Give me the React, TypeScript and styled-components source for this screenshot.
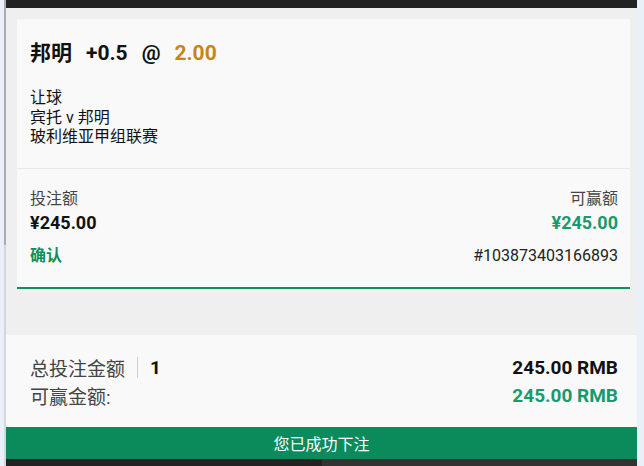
import React from "react";
import styled, { createGlobalStyle } from "styled-components";

const GlobalStyle = createGlobalStyle`
  html, body {
    margin: 0;
    padding: 0;
    background: #eaf0f8;
  }
  body {
    font-family: Roboto, "Noto Sans CJK SC", sans-serif;
    color: #111;
  }
`;

const App = () => {
  return (
    <>
      <GlobalStyle />
      <Page>
        <Gutter />
        <Track>
          <Thumb />
        </Track>
        <Panel>
          <TopBar />
          <Body>
            <Card>
              <Header>
                <Title>
                  <span>邦明</span>
                  <span>+0.5</span>
                  <span>@</span>
                  <Odds>2.00</Odds>
                </Title>
                <Details>
                  <div>让球</div>
                  <div>宾托 v 邦明</div>
                  <div>玻利维亚甲组联赛</div>
                </Details>
              </Header>
              <Stake>
                <Row>
                  <Label>投注额</Label>
                  <Label>可赢额</Label>
                </Row>
                <Row>
                  <Amount>¥245.00</Amount>
                  <Amount $green>¥245.00</Amount>
                </Row>
                <StatusRow>
                  <Status>确认</Status>
                  <Ref>#103873403166893</Ref>
                </StatusRow>
              </Stake>
            </Card>
          </Body>
          <Summary>
            <SummaryRow>
              <SummaryLabel>
                总投注金额
                <Divider />
                <Count>1</Count>
              </SummaryLabel>
              <Total>245.00 RMB</Total>
            </SummaryRow>
            <SummaryRow>
              <SummaryLabel>可赢金额:</SummaryLabel>
              <Total $green>245.00 RMB</Total>
            </SummaryRow>
          </Summary>
          <SuccessBar>您已成功下注</SuccessBar>
          <BottomBar>
            <BottomHalf />
            <BottomHalf $light />
          </BottomBar>
        </Panel>
      </Page>
    </>
  );
};

export default App;

const Page = styled.div`
  display: flex;
  height: 466px;
  overflow: hidden;
`;

const Gutter = styled.div`
  width: 4px;
  background: #eaf0f8;
`;

const Track = styled.div`
  width: 2px;
  background: #d4d8dd;
`;

const Thumb = styled.div`
  height: 245px;
  background: #a9adb2;
`;

const Panel = styled.div`
  width: 631px;
  display: flex;
  flex-direction: column;
  background: #efefef;
`;

const TopBar = styled.div`
  height: 8px;
  background: #222;
`;

const Body = styled.div`
  padding: 11px 7px 46px 11px;
`;

const Card = styled.div`
  background: #f9f9f9;
  border-bottom: 2px solid #0d8f5e;
`;

const Header = styled.div`
  padding: 22px 12px 21px 13px;
  border-bottom: 1px solid #e8e8e8;
`;

const Title = styled.div`
  display: flex;
  gap: 14px;
  font-size: 21px;
  font-weight: 700;
  line-height: 24px;
  color: #111;
`;

const Odds = styled.span`
  color: #c7841b;
`;

const Details = styled.div`
  margin-top: 23px;
  font-size: 16px;
  line-height: 19.5px;
  color: #111;
`;

const Stake = styled.div`
  padding: 20px 12px 21px 13px;
`;

const Row = styled.div`
  display: flex;
  justify-content: space-between;
  align-items: center;
`;

const Label = styled.span`
  font-size: 16px;
  line-height: 20px;
  color: #444;
`;

const Amount = styled.span<{ $green?: boolean }>`
  font-size: 18px;
  font-weight: 700;
  line-height: 24px;
  margin-top: 2px;
  color: ${(p) => (p.$green ? "#179a6c" : "#111")};
`;

const StatusRow = styled(Row)`
  margin-top: 11px;
`;

const Status = styled.span`
  font-size: 16px;
  font-weight: 700;
  line-height: 20px;
  color: #0d8f5e;
`;

const Ref = styled.span`
  font-size: 16px;
  line-height: 20px;
  color: #222;
`;

const Summary = styled.div`
  background: #f9f9f9;
  padding: 19px 19px 17px 24px;
`;

const SummaryRow = styled.div`
  display: flex;
  justify-content: space-between;
  align-items: center;
  height: 28px;
`;

const SummaryLabel = styled.span`
  display: flex;
  align-items: center;
  font-size: 19px;
  color: #444;
`;

const Divider = styled.span`
  width: 1px;
  height: 21px;
  background: #d0d0d0;
  margin: 0 12px 0 12px;
`;

const Count = styled.span`
  font-weight: 700;
  color: #111;
`;

const Total = styled.span<{ $green?: boolean }>`
  font-size: 19px;
  font-weight: 700;
  color: ${(p) => (p.$green ? "#179a6c" : "#111")};
`;

const SuccessBar = styled.div`
  height: 32px;
  display: flex;
  align-items: center;
  justify-content: center;
  background: #0b8a5c;
  color: #fff;
  font-size: 16px;
`;

const BottomBar = styled.div`
  display: flex;
  flex: 1;
`;

const BottomHalf = styled.div<{ $light?: boolean }>`
  flex: 1;
  background: ${(p) => (p.$light ? "#333" : "#222")};
`;
